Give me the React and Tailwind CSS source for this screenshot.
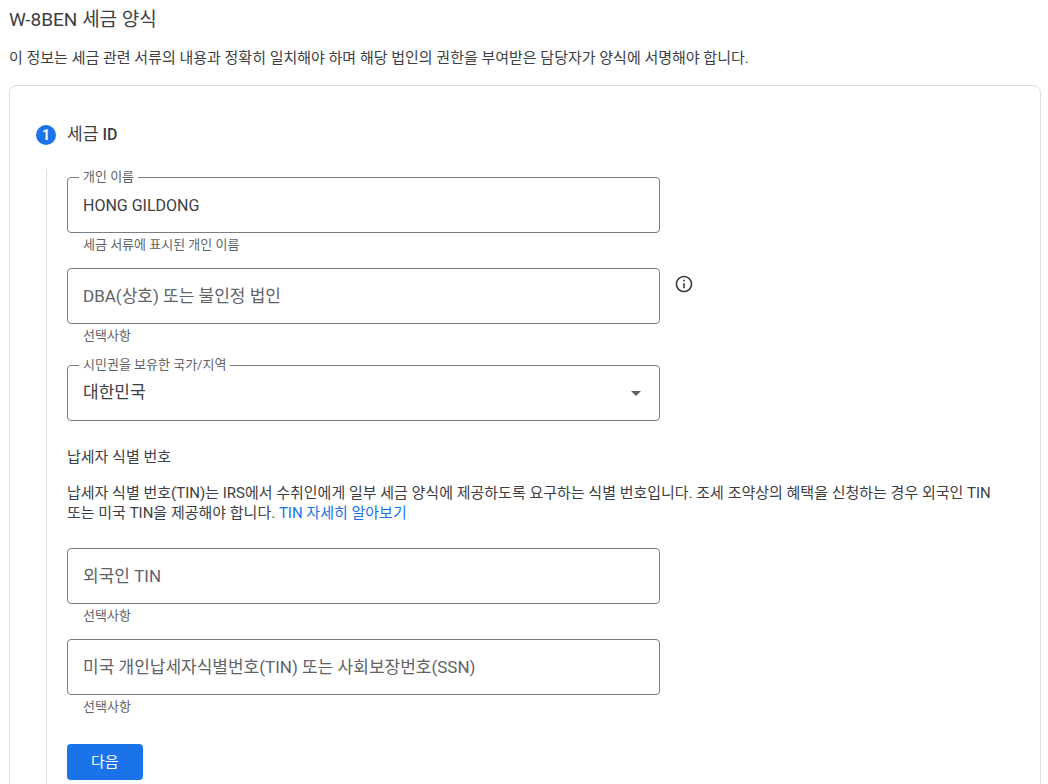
import { useState } from "react";

const Hint = ({ id, children }) => (
  <p id={id} className="h-5 pl-4 pt-0.5 text-[13px] leading-5 text-[#5f6368]">
    {children}
  </p>
);

const FloatingLabel = ({ htmlFor, children }) => (
  <label
    htmlFor={htmlFor}
    className="absolute -top-2.5 left-3 bg-white px-1 text-[13px] leading-5 text-[#5f6368]"
  >
    {children}
  </label>
);

const TextField = ({ id, label, hint, className = "", defaultValue }) => {
  if (defaultValue) {
    return (
      <div className={className}>
        <div className="relative">
          <FloatingLabel htmlFor={id}>{label}</FloatingLabel>
          <input
            id={id}
            type="text"
            defaultValue={defaultValue}
            aria-describedby={`${id}-hint`}
            className="block h-14 w-full rounded border border-[#7b7d80] px-[15px] text-base text-[#3c4043]"
          />
        </div>
        <Hint id={`${id}-hint`}>{hint}</Hint>
      </div>
    );
  }
  return (
    <div className={className}>
      <input
        id={id}
        type="text"
        placeholder={label}
        aria-label={label}
        aria-describedby={`${id}-hint`}
        className="block h-14 w-full rounded border border-[#7b7d80] px-[15px] text-[17px] text-[#3c4043] placeholder:text-[#5f6368]"
      />
      <Hint id={`${id}-hint`}>{hint}</Hint>
    </div>
  );
};

const InfoIcon = () => (
  <svg viewBox="0 0 24 24" className="h-5 w-5" fill="#3c4043" aria-hidden="true">
    <path d="M11 7h2v2h-2zm0 4h2v6h-2zm1-9C6.48 2 2 6.48 2 12s4.48 10 10 10 10-4.48 10-10S17.52 2 12 2zm0 18c-4.41 0-8-3.59-8-8s3.59-8 8-8 8 3.59 8 8-3.59 8-8 8z" />
  </svg>
);

const CountrySelect = () => {
  const [country, setCountry] = useState("KR");
  return (
    <div className="relative">
      <FloatingLabel htmlFor="country">시민권을 보유한 국가/지역</FloatingLabel>
      <select
        id="country"
        value={country}
        onChange={(e) => setCountry(e.target.value)}
        className="block h-14 w-full appearance-none rounded border border-[#7b7d80] bg-transparent px-[15px] text-[17px] text-[#3c4043]"
      >
        <option value="KR">대한민국</option>
        <option value="US">미국</option>
        <option value="JP">일본</option>
      </select>
      <svg
        viewBox="0 0 10 5"
        className="pointer-events-none absolute right-[19px] top-[26px] h-[5px] w-2.5"
        fill="#5f6368"
        aria-hidden="true"
      >
        <path d="M0 0h10L5 5z" />
      </svg>
    </div>
  );
};

const App = () => {
  return (
    <main className="h-screen overflow-hidden break-keep bg-white pl-[9px] pr-[7px] pt-2 font-['Roboto','Noto_Sans_CJK_KR',sans-serif] text-[#3c4043]">
      <h1 className="text-[19px] leading-6">W-8BEN 세금 양식</h1>
      <p className="mt-4 text-[15px] leading-5">
        이 정보는 세금 관련 서류의 내용과 정확히 일치해야 하며 해당 법인의 권한을
        부여받은 담당자가 양식에 서명해야 합니다.
      </p>
      <section className="mt-[17px] rounded-lg border border-[#dadce0] px-[26px] pb-10 pt-9">
        <div className="flex items-center gap-[11px]">
          <span className="flex h-5 w-5 items-center justify-center rounded-full bg-[#1a73e8] text-sm font-bold text-white">
            1
          </span>
          <h2 className="text-[17px] leading-6">
            세금 <span className="text-base font-medium">ID</span>
          </h2>
        </div>
        <form
          className="ml-2.5 mt-[22px] border-l border-[#dadce0] pl-5 pb-20 pt-2"
          onSubmit={(e) => e.preventDefault()}
        >
          <div className="w-[593px] max-w-full">
            <TextField
              id="name"
              label="개인 이름"
              defaultValue="HONG GILDONG"
              hint="세금 서류에 표시된 개인 이름"
            />
          </div>
          <div className="mt-[15px] flex gap-[14px]">
            <TextField
              id="dba"
              label="DBA(상호) 또는 불인정 법인"
              hint="선택사항"
              className="w-[593px] max-w-full"
            />
            <button type="button" aria-label="도움말" className="mt-1.5 h-5 w-5">
              <InfoIcon />
            </button>
          </div>
          <div className="mt-[21px] w-[593px] max-w-full">
            <CountrySelect />
          </div>
          <h3 className="mt-[26px] text-[15px] leading-5">납세자 식별 번호</h3>
          <p className="mt-4 text-[15px] leading-5">
            납세자 식별 번호(TIN)는 IRS에서 수취인에게 일부 세금 양식에 제공하도록
            요구하는 식별 번호입니다. 조세 조약상의 혜택을 신청하는 경우 외국인 TIN
            또는 미국 TIN을 제공해야 합니다.{" "}
            <a href="#tin" className="text-[#1a73e8]">
              TIN 자세히 알아보기
            </a>
          </p>
          <div className="mt-[25px] w-[593px] max-w-full">
            <TextField id="foreign-tin" label="외국인 TIN" hint="선택사항" />
            <TextField
              id="us-tin"
              label="미국 개인납세자식별번호(TIN) 또는 사회보장번호(SSN)"
              hint="선택사항"
              className="mt-[15px]"
            />
          </div>
          <button
            type="submit"
            className="mt-[29px] h-9 rounded bg-[#1a73e8] px-6 text-[15px] text-white"
          >
            다음
          </button>
        </form>
      </section>
    </main>
  );
};

export default App;
